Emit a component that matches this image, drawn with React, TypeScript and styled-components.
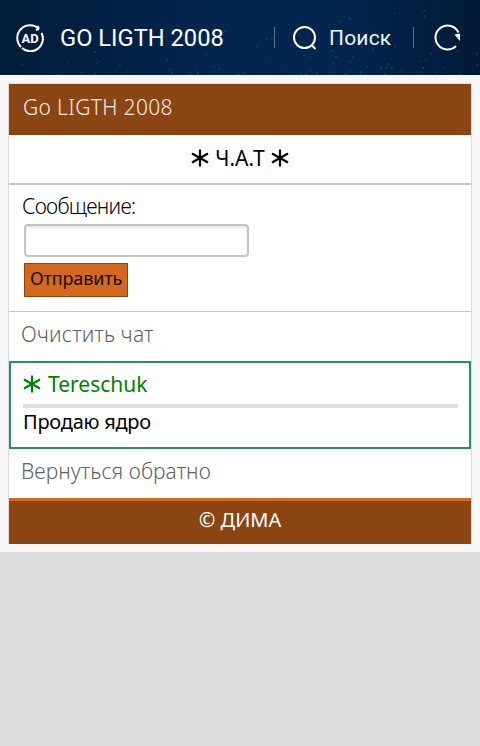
import React from "react";
import styled, { createGlobalStyle } from "styled-components";

// scattered stars for the top bar, fixed seed so it stays the same on reload
const makeStars = (count: number) => {
  const out: string[] = [];
  let seed = 7;
  const next = () => {
    seed = (seed * 16807) % 2147483647;
    return seed / 2147483647;
  };
  for (let i = 0; i < count; i++) {
    const x = Math.round(next() * 480);
    const y = Math.round(next() * next() * 75 * -1 + 75);
    const a = (0.1 + next() * 0.25).toFixed(2);
    out.push(`radial-gradient(1px 1px at ${x}px ${y}px, rgba(210, 225, 245, ${a}), transparent)`);
  }
  return out.join(", ");
};

const Global = createGlobalStyle`
  html, body {
    margin: 0;
    padding: 0;
    background: #dddddd;
    font-family: "Noto Sans", "Liberation Sans", sans-serif;
  }
  * { box-sizing: border-box; }
`;

const TopBar = styled.header`
  height: 75px;
  display: flex;
  align-items: center;
  padding: 0 19px 0 16px;
  color: #fff;
  background-color: #02224a;
  background-image:
    ${makeStars(110)},
    linear-gradient(90deg, #021c3a 0%, #03264e 45%, #03264f 70%, #021a37 100%);
`;

const Brand = styled.div`
  flex: 1;
  display: flex;
  align-items: center;
  gap: 16px;
`;

const BrandTitle = styled.span`
  font-family: Roboto, sans-serif;
  font-size: 23.7px;
  line-height: 28px;
`;

const Divider = styled.span`
  width: 1px;
  height: 21px;
  background: rgba(255, 255, 255, 0.35);
`;

const SearchBtn = styled.div`
  width: 138px;
  display: flex;
  align-items: center;
  gap: 12px;
  padding-left: 18px;
  font-family: Roboto, sans-serif;
  font-size: 21px;
  letter-spacing: 0.2px;
  color: #f0f4f8;
`;

const RefreshBtn = styled.div`
  display: flex;
  margin-left: 20px;
`;

const Page = styled.main`
  background: #f7f7f7;
  padding: 8px 8px;
  height: 477px;
`;

const Card = styled.section`
  border: 1px solid #dcdcdc;
  border-bottom-color: #d6d6d6;
  background: #fff;
  height: 461px;
  font-family: "Noto Sans", sans-serif;
`;

const CardHead = styled.div`
  height: 51px;
  background: #8b4513;
  color: #f8eee6;
  display: flex;
  align-items: center;
  padding: 0 0 5px 14px;
  font-size: 21px;
  font-weight: 300;
  letter-spacing: 0.35px;
`;

const ChatTitle = styled.div`
  height: 50px;
  border-bottom: 2px solid #c8c8c8;
  display: flex;
  align-items: center;
  justify-content: center;
  gap: 6px;
  padding-bottom: 3px;
  font-size: 21px;
  color: #000;
`;

const FormBlock = styled.form`
  height: 127px;
  padding: 8px 13px 0;
  border-bottom: 1px solid #c8c8c8;
`;

const FieldLabel = styled.label`
  display: block;
  height: 31px;
  font-size: 21px;
  font-weight: 300;
  line-height: 27px;
  letter-spacing: -0.7px;
  color: #000;
`;

const TextInput = styled.input`
  display: block;
  width: 225px;
  height: 33px;
  margin: 0 0 6px 2px;
  border: 2px solid #c4c4c4;
  border-radius: 4px;
  background: #fff;
  box-shadow: inset 0 2px 3px rgba(0, 0, 0, 0.1);
  outline: 0;
`;

const SendButton = styled.button`
  display: block;
  width: 104px;
  height: 34px;
  margin-left: 2px;
  padding: 0 0 5px;
  border: 1px solid #8b4513;
  background: #d2691e;
  color: #1a0a00;
  font-family: "Noto Sans", sans-serif;
  font-size: 18px;
  letter-spacing: -0.15px;
`;

const LinkRow = styled.a<{ $h: number; $spacing: number }>`
  display: flex;
  align-items: center;
  height: ${(p) => p.$h}px;
  padding: 0 0 5px 12px;
  font-size: 21px;
  font-weight: 300;
  letter-spacing: ${(p) => p.$spacing}px;
  color: #5f5f5f;
`;

const Message = styled.article`
  height: 88px;
  border: 2px solid #2e8b72;
  padding: 0 11px 0 12px;
`;

const Author = styled.div`
  height: 45px;
  display: flex;
  align-items: center;
  gap: 7px;
  border-bottom: 4px solid #e0e0e0;
  color: #008000;
  font-size: 21px;
`;

const Body = styled.div`
  height: 37px;
  display: flex;
  align-items: center;
  padding-bottom: 10px;
  font-size: 20px;
  letter-spacing: -0.25px;
  color: #000;
`;

const Footer = styled.footer`
  height: 46px;
  background: #8b4513;
  border-top: 3px solid #d2691e;
  color: #fff;
  display: flex;
  align-items: center;
  justify-content: center;
  padding-bottom: 7px;
  font-size: 20px;
`;

const Rest = styled.div`
  height: 194px;
  background: #dddddd;
`;

const Star = () => (
  <svg width="18" height="18" viewBox="0 0 18 18" fill="none" stroke="currentColor" strokeWidth="2.2">
    <path d="M9 .5v17M1 4.5l16 9M17 4.5l-16 9" />
  </svg>
);

const AdIcon = () => (
  <svg width="28" height="28" viewBox="0 0 28 28" fill="none" stroke="#fff" strokeWidth="2">
    <path d="M5 23A12.5 12.5 0 0 1 23 5M23 5l-1.5-3M23 5l-3 1" />
    <path d="M25.5 9A12.5 12.5 0 0 1 6 24" />
    <text x="14" y="19" textAnchor="middle" fill="#fff" stroke="none" fontFamily="Roboto, sans-serif" fontWeight="700" fontSize="13">
      AD
    </text>
  </svg>
);

const SearchIcon = () => (
  <svg width="24" height="24" viewBox="0 0 24 24" fill="none" stroke="#fff" strokeWidth="2">
    <circle cx="11.5" cy="11.5" r="10.5" />
    <path d="M18.5 19l4 4" />
  </svg>
);

const RefreshIcon = () => (
  <svg width="27" height="27" viewBox="0 0 27 27" fill="none" stroke="#fff" strokeWidth="2">
    <path d="M24.4 8.5A12 12 0 1 0 22 22" />
    <path d="M20.5 10.5L26 9.5V17z" fill="#fff" stroke="none" />
  </svg>
);

export default function App() {
  return (
    <>
      <Global />
      <TopBar>
        <Brand>
          <AdIcon />
          <BrandTitle>GO LIGTH 2008</BrandTitle>
        </Brand>
        <Divider />
        <SearchBtn>
          <SearchIcon />
          Поиск
        </SearchBtn>
        <Divider />
        <RefreshBtn>
          <RefreshIcon />
        </RefreshBtn>
      </TopBar>
      <Page>
        <Card>
          <CardHead>Go LIGTH 2008</CardHead>
          <ChatTitle>
            <Star />
            Ч.А.Т
            <Star />
          </ChatTitle>
          <FormBlock>
            <FieldLabel>Сообщение:</FieldLabel>
            <TextInput />
            <SendButton type="button">Отправить</SendButton>
          </FormBlock>
          <LinkRow $h={49} $spacing={0.15}>Очистить чат</LinkRow>
          <Message>
            <Author>
              <Star />
              Tereschuk
            </Author>
            <Body>Продаю ядро</Body>
          </Message>
          <LinkRow $h={49} $spacing={0.07}>Вернуться обратно</LinkRow>
          <Footer>© ДИМА</Footer>
        </Card>
      </Page>
      <Rest />
    </>
  );
}
